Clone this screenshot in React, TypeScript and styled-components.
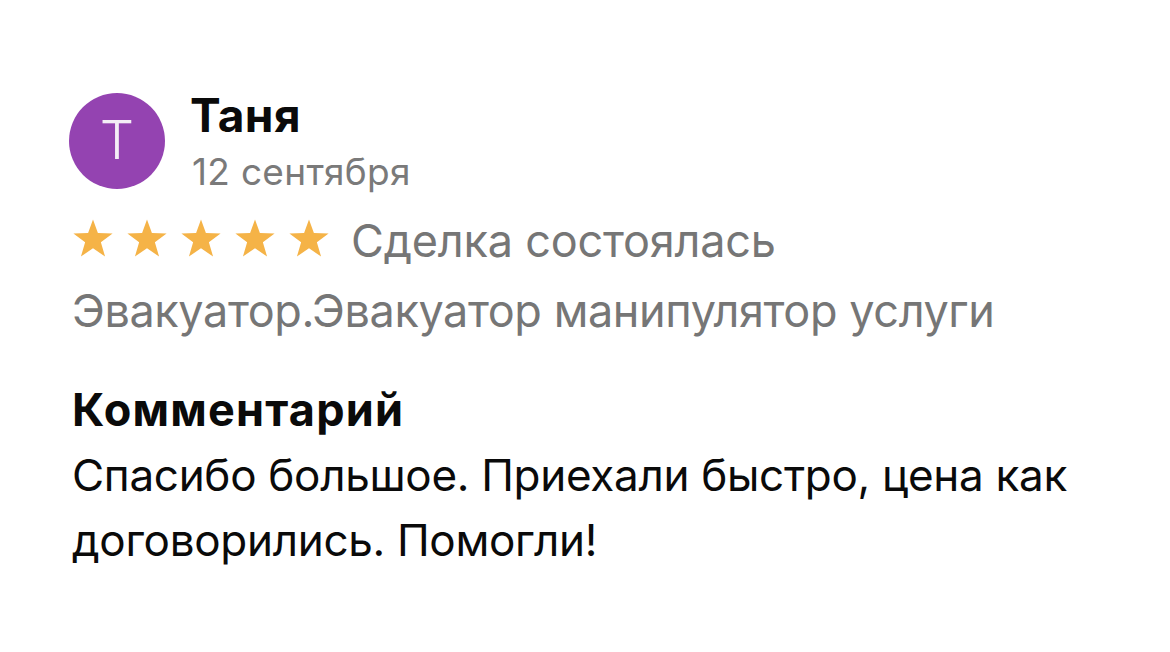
import React from "react";
import styled, { createGlobalStyle } from "styled-components";

const Global = createGlobalStyle`
  html, body { margin: 0; padding: 0; background: #ffffff; }
  body { font-family: Inter, "Noto Sans", sans-serif; -webkit-font-smoothing: antialiased; }
`;

const Card = styled.div`
  display: flex;
  flex-direction: column;
  padding: 87px 0 0 72px;
  width: 1060px;
`;

const Header = styled.div`
  display: flex;
  align-items: center;
  gap: 25px;
  margin-left: -3px;
`;

const Avatar = styled.div`
  width: 96px;
  height: 96px;
  border-radius: 50%;
  background: #9443b1;
  color: #f4eef6;
  display: flex;
  align-items: center;
  justify-content: center;
  font-size: 54px;
  font-weight: 300;
  line-height: 1;
  padding-bottom: 2px;
  box-sizing: border-box;
`;

const NameBlock = styled.div`
  display: flex;
  flex-direction: column;
`;

const Name = styled.div`
  font-size: 46px;
  line-height: 56px;
  font-weight: 700;
  color: #0a0a0a;
  letter-spacing: 0.4px;
`;

const DateText = styled.div`
  font-size: 37px;
  line-height: 44px;
  color: #7a7a7a;
  margin-top: 7px;
  margin-left: 2px;
  letter-spacing: 0.3px;
`;

const RatingRow = styled.div`
  display: flex;
  align-items: center;
  gap: 21px;
  margin-top: 20px;
`;

const Stars = styled.div`
  display: flex;
  gap: 12px;
  margin-bottom: 6px;
`;

const Muted = styled.div`
  font-size: 45px;
  line-height: 54px;
  color: #767676;
  letter-spacing: -0.2px;
`;

const Category = styled(Muted)`
  margin-top: 16px;
  letter-spacing: -0.4px;
`;

const Heading = styled.div`
  font-size: 45px;
  line-height: 54px;
  font-weight: 700;
  color: #0a0a0a;
  margin-top: 45px;
  letter-spacing: 1.2px;
`;

const Comment = styled.div`
  font-size: 44px;
  line-height: 65px;
  color: #0a0a0a;
  margin-top: 6px;
  max-width: 1040px;
  letter-spacing: -0.3px;
`;

const Star = () => (
  <svg width="42" height="41" viewBox="0 0 24 23">
    <polygon
      points="12,0.6 14.8,8.4 23.2,8.6 16.5,13.7 18.9,21.8 12,17 5.1,21.8 7.5,13.7 0.8,8.6 9.2,8.4"
      fill="#f5b347"
    />
  </svg>
);

export default function App() {
  return (
    <>
      <Global />
      <Card>
        <Header>
          <Avatar>T</Avatar>
          <NameBlock>
            <Name>Таня</Name>
            <DateText>12 сентября</DateText>
          </NameBlock>
        </Header>
        <RatingRow>
          <Stars>
            {[0, 1, 2, 3, 4].map((i) => (
              <Star key={i} />
            ))}
          </Stars>
          <Muted>Сделка состоялась</Muted>
        </RatingRow>
        <Category>Эвакуатор.Эвакуатор манипулятор услуги</Category>
        <Heading>Комментарий</Heading>
        <Comment>
          Спасибо большое. Приехали быстро, цена как договорились. Помогли!
        </Comment>
      </Card>
    </>
  );
}
